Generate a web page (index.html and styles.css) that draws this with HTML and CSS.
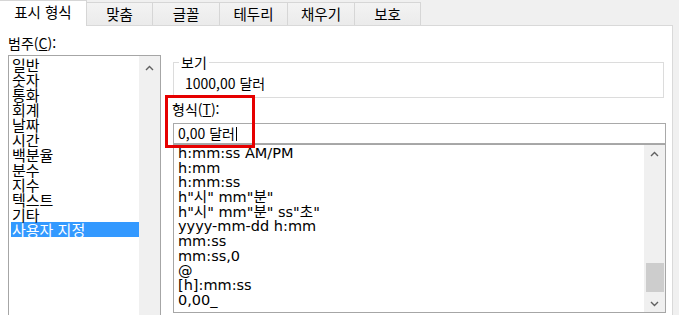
FILE: index.html
```html
<!DOCTYPE html>
<html lang="ko">
<head>
<meta charset="utf-8">
<title>셀 서식</title>
<link rel="stylesheet" href="styles.css">
</head>
<body>
<div class="window">
  <div class="tabs">
    <div class="tab active">표시 형식</div>
    <div class="tab w67">맞춤</div>
    <div class="tab w68">글꼴</div>
    <div class="tab w69">테두리</div>
    <div class="tab w68">채우기</div>
    <div class="tab w67">보호</div>
  </div>
  <div class="panel">
    <div class="cat">
      <div class="label">범주(<u>C</u>):</div>
      <div class="listbox cat-list">
        <ul class="cat-items">
          <li>일반</li>
          <li>숫자</li>
          <li>통화</li>
          <li>회계</li>
          <li>날짜</li>
          <li>시간</li>
          <li>백분율</li>
          <li>분수</li>
          <li>지수</li>
          <li>텍스트</li>
          <li>기타</li>
          <li class="selected">사용자 지정</li>
        </ul>
        <div class="vscroll">
          <div class="arrow"><svg width="9" height="6" viewBox="0 0 9 6"><polyline points="1,5 4.5,1.5 8,5" fill="none" stroke="#606060" stroke-width="1.4"/></svg></div>
        </div>
      </div>
    </div>
    <div class="main">
      <fieldset class="preview">
        <legend>보기</legend>
        <div class="sample">1000,00 달러</div>
      </fieldset>
      <div class="label fmt-label">형식(<u>T</u>):</div>
      <div class="input">0,00 달러<span class="caret"></span></div>
      <div class="listbox fmt-list">
        <ul class="fmt-items">
          <li>h:mm:ss AM/PM</li>
          <li>h:mm</li>
          <li>h:mm:ss</li>
          <li>h"시" mm"분"</li>
          <li>h"시" mm"분" ss"초"</li>
          <li>yyyy-mm-dd h:mm</li>
          <li>mm:ss</li>
          <li>mm:ss,0</li>
          <li>@</li>
          <li>[h]:mm:ss</li>
          <li>0,00_</li>
        </ul>
        <div class="vscroll">
          <div class="arrow"><svg width="9" height="6" viewBox="0 0 9 6"><polyline points="1,5 4.5,1.5 8,5" fill="none" stroke="#606060" stroke-width="1.4"/></svg></div>
          <div class="track"></div>
          <div class="thumb"></div>
          <div class="arrow down"><svg width="9" height="6" viewBox="0 0 9 6"><polyline points="1,1 4.5,4.5 8,1" fill="none" stroke="#606060" stroke-width="1.4"/></svg></div>
        </div>
      </div>
    </div>
  </div>
  <div class="highlight"></div>
</div>
</body>
</html>
```

FILE: styles.css
```css
* { box-sizing: border-box; }

html, body {
  margin: 0;
  padding: 0;
}

body {
  background: #f0f0f0;
  width: 679px;
  height: 315px;
  overflow: hidden;
  font-family: "Noto Sans CJK KR", sans-serif;
  color: #000;
}

.window {
  position: relative;
  width: 679px;
  height: 315px;
}

/* Tabs */
.tabs {
  display: flex;
  height: 25px;
  align-items: flex-end;
}

.tab {
  height: 23px;
  margin-left: -1px;
  border: 1px solid #d6d6d6;
  border-bottom: none;
  background: linear-gradient(#f3f3f3, #ebebeb);
  font-size: 14.5px;
  line-height: 21px;
  text-align: center;
}

.tab.active {
  position: relative;
  z-index: 1;
  margin-left: -1px;
  width: 88px;
  height: 26px;
  margin-bottom: -1px;
  background: #fff;
  line-height: 22px;
  border-color: #d6d6d6;
}

.w67 { width: 67px; }
.w68 { width: 68px; }
.w69 { width: 69px; }

/* Panel */
.panel {
  margin-left: -1px;
  width: 674px;
  height: 300px;
  background: #fff;
  border: 1px solid #d9d9d9;
  display: grid;
  grid-template-columns: 153px 493px;
  column-gap: 12px;
  padding-left: 8px;
}

.label {
  font-size: 14px;
  line-height: 16px;
  height: 16px;
}

.cat {
  padding-top: 9px;
}

.cat .label {
  margin-bottom: 4px;
}

.listbox {
  display: flex;
  border: 1px solid #a6a6a6;
  background: #fff;
  overflow: hidden;
}

.cat-list {
  height: 270px;
}

.cat-items {
  list-style: none;
  margin: 0;
  padding: 1px 0 0 2px;
  flex: 1;
  font-size: 15px;
  line-height: 15px;
}

.cat-items li {
  height: 15px;
  padding-left: 1px;
  white-space: nowrap;
}

.cat-items li.selected {
  background: #3399ff;
  color: #fff;
}

.vscroll {
  width: 21px;
  background: #f0f0f0;
  display: flex;
  flex-direction: column;
  align-items: center;
}

.arrow {
  height: 17px;
  width: 100%;
  display: flex;
  align-items: center;
  justify-content: center;
}

.cat-list .arrow {
  height: 24px;
}

.track {
  flex: 1;
}

.thumb {
  width: 18px;
  height: 29px;
  background: #cdcdcd;
  margin-bottom: 3px;
}

/* Right side */
.main {
  padding-top: 29px;
}

.preview {
  margin: 0;
  width: 491px;
  border: 1px solid #dcdcdc;
  padding: 6px 0 6px 11px;
}

.preview legend {
  font-size: 14px;
  line-height: 14px;
  padding: 0 2px;
  margin-left: -6px;
}

.sample {
  font-size: 14px;
  line-height: 16px;
}

.fmt-label {
  margin-top: 3px;
  margin-left: -1px;
}

.input {
  margin-top: 6px;
  height: 21px;
  border: 1px solid #a9a9a9;
  padding-left: 4px;
  font-size: 14px;
  line-height: 19px;
  display: flex;
  align-items: center;
}

.caret {
  display: inline-block;
  width: 1px;
  height: 14px;
  background: #000;
  margin-left: 1px;
}

.fmt-list {
  height: 169px;
}

.fmt-items {
  list-style: none;
  margin: 0;
  padding: 1px 0 0 4px;
  flex: 1;
  font-family: "DejaVu Sans", "Noto Sans CJK KR", sans-serif;
  font-size: 14.5px;
  line-height: 14.7px;
}

.fmt-items li {
  height: 14.7px;
  white-space: nowrap;
}

/* Annotation */
.highlight {
  position: absolute;
  left: 165px;
  top: 95px;
  width: 90px;
  height: 53px;
  border: 3px solid #e60000;
  z-index: 2;
}
```
